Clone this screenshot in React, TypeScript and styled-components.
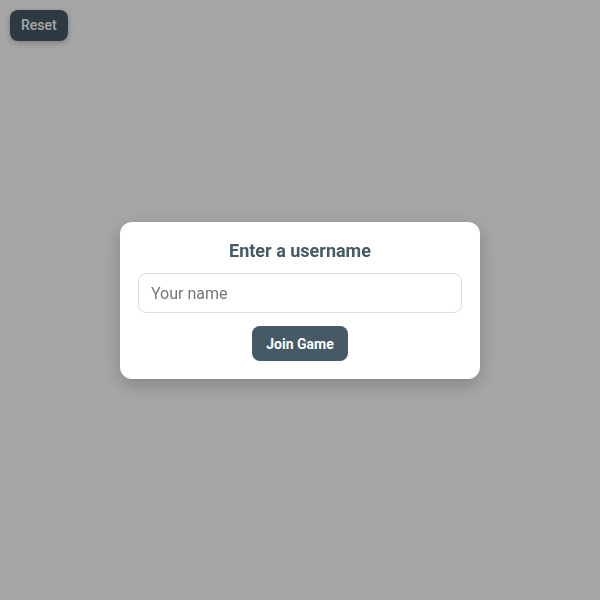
import React from "react";
import styled, { createGlobalStyle } from "styled-components";

const GlobalStyle = createGlobalStyle`
  html, body {
    margin: 0;
    padding: 0;
    background: #ffffff;
    font-family: Roboto, "Liberation Sans", sans-serif;
  }
`;

const Page = styled.div`
  position: relative;
  width: 100vw;
  height: 100vh;
  padding: 10px;
  box-sizing: border-box;
`;

const ResetButton = styled.button`
  background-color: #455a64;
  color: #ffffff;
  border: none;
  border-radius: 8px;
  padding: 7px 11px;
  font-family: inherit;
  font-size: 14px;
  font-weight: 500;
  line-height: 17px;
  box-shadow: 0 2px 6px rgba(0, 0, 0, 0.25);
  cursor: pointer;
`;

const Backdrop = styled.div`
  position: fixed;
  top: 0;
  left: 0;
  right: 0;
  bottom: 0;
  background-color: rgba(0, 0, 0, 0.35);
  display: flex;
  justify-content: center;
  align-items: center;
  z-index: 1000;
`;

const Dialog = styled.div`
  background-color: white;
  width: 360px;
  box-sizing: border-box;
  padding: 18px;
  border-radius: 12px;
  box-shadow: 0 6px 20px rgba(0, 0, 0, 0.22);
  display: flex;
  flex-direction: column;
  align-items: center;
  gap: 12px;
  margin-top: 1px;
`;

const Title = styled.h2`
  margin: 0;
  font-size: 18px;
  line-height: 21px;
  font-weight: 700;
  color: #455a64;
`;

const NameInput = styled.input`
  width: 100%;
  box-sizing: border-box;
  height: 40px;
  padding: 0 12px;
  border: 1px solid #dddddd;
  border-radius: 8px;
  font-family: inherit;
  font-size: 16px;
  color: #333;
  outline: none;

  &::placeholder {
    color: #777777;
  }
`;

const JoinButton = styled.button`
  margin-top: 1px;
  background-color: #455a64;
  color: white;
  border: none;
  border-radius: 8px;
  height: 35px;
  padding: 0 14px;
  font-family: inherit;
  font-size: 14px;
  font-weight: 700;
  cursor: pointer;
`;

export default function App() {
  return (
    <>
      <GlobalStyle />
      <Page>
        <ResetButton>Reset</ResetButton>
        <Backdrop>
          <Dialog>
            <Title>Enter a username</Title>
            <NameInput placeholder="Your name" />
            <JoinButton>Join Game</JoinButton>
          </Dialog>
        </Backdrop>
      </Page>
    </>
  );
}
